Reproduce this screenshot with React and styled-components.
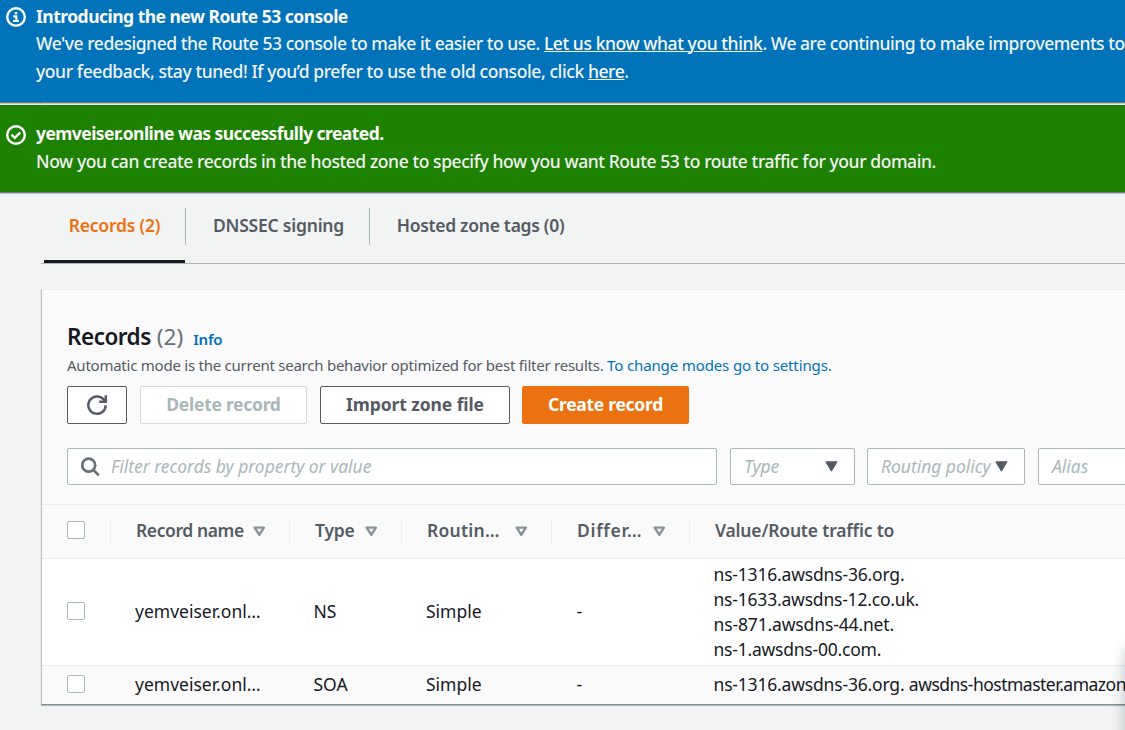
import React from 'react';
import styled, { createGlobalStyle } from 'styled-components';

const GlobalStyle = createGlobalStyle`
  *, *::before, *::after { box-sizing: border-box; }
  body {
    margin: 0;
    overflow: hidden;
    background: #f2f3f3;
    color: #16191f;
    font-family: "Noto Sans", "Open Sans", sans-serif;
    font-size: 17.5px;
  }
`;

const Page = styled.div`
  position: relative;
  display: flex;
  flex-direction: column;
  width: 100%;
  height: 730px;
  overflow: hidden;
`;

const Tracked = styled.span`
  letter-spacing: ${({ $by }) => $by}px;
`;

/* Notification banners */

const BannerStack = styled.div`
  display: flex;
  flex-direction: column;
  gap: 3px;
  background: linear-gradient(#d9dcdc, #d9dcdc) 40px 0 / 1px 100% no-repeat #f2f3f3;
`;

const Banner = styled.section`
  display: flex;
  gap: 10px;
  height: ${({ $height }) => $height}px;
  padding: ${({ $top }) => $top}px 0 0 6px;
  background: ${({ $tone }) => ($tone === 'info' ? '#0073bb' : '#1d8102')};
  color: #fafafa;
  box-shadow: 0 1px 1px rgba(0, 28, 36, 0.5), 0 2px 1px rgba(0, 28, 36, 0.12);
  white-space: nowrap;
`;

const BannerIcon = styled.svg`
  flex: none;
  width: 20px;
  height: 20px;
  margin-top: ${({ $drop }) => $drop}px;
`;

const BannerTitle = styled.h2`
  margin: 0;
  font-size: 17.5px;
  font-weight: 700;
  line-height: ${({ $line }) => $line}px;
  letter-spacing: ${({ $by }) => $by}px;
`;

const BannerLine = styled.div`
  font-weight: 500;
  line-height: 28px;
  color: #f2f3f3;
`;

const BannerLink = styled.a`
  letter-spacing: -0.42px;
  color: #fafafa;
  text-decoration: underline;
  text-decoration-thickness: 1px;
  text-decoration-skip-ink: auto;
  text-underline-offset: 1px;
`;

/* Tabs */

const Tabs = styled.nav`
  display: flex;
  flex: none;
  height: 72px;
  margin: 0 0 25px 41px;
  padding-left: 3px;
  border-bottom: 1px solid #aab7b8;
`;

const Tab = styled.div`
  display: flex;
  justify-content: center;
  width: ${({ $width }) => $width}px;
  padding: 19px 0 0 ${({ $shift }) => $shift || 0}px;
  border-bottom: 3px solid ${({ $active }) => ($active ? '#16191f' : 'transparent')};
  color: ${({ $active }) => ($active ? '#ec7211' : '#545b64')};
  font-weight: 600;
  line-height: 28px;
  letter-spacing: ${({ $by }) => $by}px;
  white-space: nowrap;
`;

const TabDivider = styled.span`
  width: 1px;
  height: 37px;
  margin-top: 16px;
  background: #aab7b8;
`;

/* Records panel */

const Panel = styled.main`
  display: flex;
  flex: none;
  flex-direction: column;
  height: 416px;
  margin-left: 41px;
  border-top: 1px solid #eaeded;
  border-left: 1px solid #bcc5c6;
  border-bottom: 1px solid #7f8f91;
  background: #fafafa;
  box-shadow: 0 1px 1px rgba(0, 28, 36, 0.25);
`;

const PanelHeader = styled.header`
  display: flex;
  flex: none;
  flex-direction: column;
  height: 214px;
  padding: 31px 0 0 25px;
`;

const HeadingRow = styled.div`
  display: flex;
  align-items: baseline;
  height: 31px;
  line-height: 31px;
`;

const Heading = styled.h1`
  margin: 0;
  font-size: 22.5px;
  font-weight: 600;
  letter-spacing: -0.5px;
`;

const Counter = styled.span`
  margin-left: 6px;
  color: #687078;
  font-size: 22.5px;
`;

const InfoLink = styled.a`
  margin-left: 10px;
  color: #0073bb;
  font-size: 15px;
  font-weight: 600;
  letter-spacing: -0.2px;
`;

const Description = styled.p`
  margin: 3px 0 11px;
  color: #545b64;
  font-size: 15px;
  line-height: 20px;
  letter-spacing: -0.24px;
  white-space: nowrap;
`;

const TextLink = styled.a`
  letter-spacing: -0.13px;
  color: #0073bb;
`;

const Actions = styled.div`
  display: flex;
  gap: 13px;
`;

const Button = styled.button`
  display: flex;
  align-items: center;
  justify-content: center;
  width: ${({ $width }) => $width}px;
  height: 38px;
  padding: 0 0 2px;
  border: 1px solid ${({ $kind }) => ({ normal: '#545b64', disabled: '#d5dbdb', primary: '#ec7211' })[$kind]};
  border-radius: 2px;
  background: ${({ $kind }) => ($kind === 'primary' ? '#ec7211' : '#fff')};
  color: ${({ $kind }) => ({ normal: '#545b64', disabled: '#aab7b8', primary: '#fff' })[$kind]};
  font: 700 17.5px/24px "Noto Sans", sans-serif;
  letter-spacing: ${({ $kind }) => ($kind === 'normal' ? -0.1 : -0.28)}px;

  &:last-child { margin-left: -1px; }
`;

const RefreshButton = styled(Button)`
  padding: 0;
`;

const Filters = styled.div`
  display: flex;
  gap: 13px;
  margin-top: 24px;
`;

const Field = styled.div`
  display: flex;
  flex: none;
  align-items: center;
  width: ${({ $width }) => $width}px;
  height: 37px;
  padding: 0 16px 0 13px;
  border: 1px solid #aab7b8;
  border-radius: 2px;
  background: #fff;
  color: #aab7b8;
  font-style: italic;
  letter-spacing: -0.04px;
  white-space: nowrap;
`;

const Placeholder = styled.span`
  padding-bottom: 2px;
  line-height: 24px;
`;

const Select = styled(Field)`
  justify-content: space-between;

  & + & { margin-left: -1px; }
  & + & + & { margin-left: 0; }
`;

const SearchIcon = styled.svg`
  flex: none;
  width: 20px;
  height: 20px;
  margin-right: 10px;
`;

/* Table */

const Row = styled.div`
  display: grid;
  flex: none;
  grid-template-columns: 69px 179px 112px 150px 138px 1fr;
  align-items: center;
  height: ${({ $height }) => $height}px;
  border-top: 1px solid #eaeded;
  background: ${({ $plain }) => ($plain ? '#fff' : '#fafafa')};
  overflow: hidden;
`;

const CheckCell = styled.div`
  display: flex;
  align-items: center;
  height: 25px;
  padding: 0 0 ${({ $lift }) => $lift || 2}px 25px;
  border-right: 1px solid ${({ $divided }) => ($divided ? '#eaeded' : 'transparent')};
`;

const Checkbox = styled.span`
  width: 18px;
  height: 18px;
  border: 1px solid #aab7b8;
  border-radius: 2px;
  background: #fff;
`;

const HeadCell = styled.div`
  display: flex;
  align-items: center;
  justify-content: space-between;
  height: 25px;
  padding: 0 23px 0 25px;
  border-right: 1px solid ${({ $last }) => ($last ? 'transparent' : '#eaeded')};
  color: #545b64;
  font-weight: 600;
  line-height: 24px;
  white-space: nowrap;
`;

const HeadLabel = styled(Tracked)`
  padding-bottom: 4px;
`;

const Cell = styled.div`
  padding: 0 0 2px ${({ $inset }) => $inset || 24}px;
  line-height: 25px;
  white-space: nowrap;
`;

const ValueCell = styled(Cell)`
  padding-bottom: ${({ $lift }) => $lift}px;
`;

const SplitPanelEdge = styled.div`
  position: absolute;
  top: 650px;
  left: 1125px;
  width: 40px;
  height: 120px;
  box-shadow: 0 0 14px rgba(0, 28, 36, 0.25);
`;

const SortIcon = () => (
  <svg width="13" height="11" viewBox="0 0 13 11" fill="none" stroke="#879596" strokeWidth="2.4" strokeLinejoin="round">
    <path d="M1.7 1.6h9.2L6.3 8.9z" />
  </svg>
);

const CaretIcon = () => (
  <svg width="13" height="11" viewBox="0 0 13 11" fill="#545b64" stroke="#545b64" strokeWidth="1" strokeLinejoin="round">
    <path d="M.8.8h11.2L6.4 10.2z" />
  </svg>
);

const COLUMNS = [
  { label: 'Record name', by: -0.4 },
  { label: 'Type', by: -0.2 },
  { label: 'Routin…', by: 0.25 },
  { label: 'Differ…', by: 0.7 },
];

const RECORDS = [
  {
    type: 'NS',
    height: 107,
    lift: 0,
    values: [
      [['ns-1316.awsdns-36.org.', -0.18]],
      [['ns-1633.awsdns-12.co.uk.', -0.2]],
      [['ns-871.awsdns-44.net.', -0.14]],
      [['ns-1.awsdns-00.com.', -0.22]],
    ],
  },
  {
    type: 'SOA',
    height: 39,
    lift: 2,
    values: [[['ns-1316.awsdns-36.org. ', -0.18], ['awsdns-hostmaster.amazon', -0.5]]],
  },
];

export default function App() {
  return (
    <Page>
      <GlobalStyle />
      <BannerStack>
        <Banner $tone="info" $height={102} $top={3}>
          <BannerIcon $drop={4} viewBox="0 0 20 20" fill="none" stroke="#fafafa" strokeWidth="2.4">
            <circle cx="10" cy="10" r="8.8" />
            <path d="M8.7 6.1h2.6M7.4 9.4h2.9v4.4M7 14h6" strokeWidth="2.2" />
          </BannerIcon>
          <div>
            <BannerTitle $line={26} $by={-0.52}>Introducing the new Route 53 console</BannerTitle>
            <BannerLine>
              <Tracked $by={-0.455}>We've redesigned the Route 53 console to make it easier to use. </Tracked>
              <BannerLink>Let us know what you think</BannerLink>
              <Tracked $by={-0.48}>. We are continuing to make improvements to</Tracked>
            </BannerLine>
            <BannerLine>
              <Tracked $by={-0.41}>your feedback, stay tuned! If you’d prefer to use the old console, click </Tracked>
              <BannerLink>here</BannerLink>.
            </BannerLine>
          </div>
        </Banner>
        <Banner $tone="success" $height={87} $top={15}>
          <BannerIcon $drop={5} viewBox="0 0 20 20" fill="none" stroke="#fafafa" strokeWidth="2.4">
            <circle cx="10" cy="10" r="8.8" />
            <path d="M5.4 9.6l3.4 3.2 5.5-5.5" />
          </BannerIcon>
          <div>
            <BannerTitle $line={27} $by={-0.56}>yemveiser.online was successfully created.</BannerTitle>
            <BannerLine>
              <Tracked $by={-0.425}>
                Now you can create records in the hosted zone to specify how you want Route 53 to route traffic for your domain.
              </Tracked>
            </BannerLine>
          </div>
        </Banner>
      </BannerStack>

      <Tabs>
        <Tab $active $width={141} $by={-0.2}>Records (2)</Tab>
        <TabDivider />
        <Tab $width={183} $shift={2} $by={-0.22}>DNSSEC signing</Tab>
        <TabDivider />
        <Tab $width={221} $by={-0.3}>Hosted zone tags (0)</Tab>
      </Tabs>

      <Panel>
        <PanelHeader>
          <HeadingRow>
            <Heading>Records</Heading>
            <Counter>(2)</Counter>
            <InfoLink>Info</InfoLink>
          </HeadingRow>
          <Description>
            Automatic mode is the current search behavior optimized for best filter results.{' '}
            <TextLink>To change modes go to settings.</TextLink>
          </Description>
          <Actions>
            <RefreshButton $kind="normal" $width={60} aria-label="Refresh">
              <svg width="22" height="22" viewBox="0 0 22 22" fill="none" stroke="#545b64" strokeWidth="2.5">
                <path d="M19.7 11.4a8.7 8.7 0 1 1-2.3-6.2l2.2 2.2" />
                <path d="M19.8 1.2v6.6h-6.6" />
              </svg>
            </RefreshButton>
            <Button $kind="disabled" $width={167}>Delete record</Button>
            <Button $kind="normal" $width={190}>Import zone file</Button>
            <Button $kind="primary" $width={167}>Create record</Button>
          </Actions>
          <Filters>
            <Field $width={650}>
              <SearchIcon viewBox="0 0 20 20" fill="none" stroke="#687078" strokeWidth="2.7">
                <circle cx="7.7" cy="8.2" r="6.5" />
                <path d="M12.4 13l5.5 5.4" />
              </SearchIcon>
              <Placeholder>Filter records by property or value</Placeholder>
            </Field>
            <Select $width={125}><Placeholder>Type</Placeholder><CaretIcon /></Select>
            <Select $width={158}><Placeholder>Routing policy</Placeholder><CaretIcon /></Select>
            <Select $width={125}><Placeholder>Alias</Placeholder><CaretIcon /></Select>
          </Filters>
        </PanelHeader>

        <Row $height={54}>
          <CheckCell $divided $lift={4}><Checkbox /></CheckCell>
          {COLUMNS.map(({ label, by }) => (
            <HeadCell key={label}>
              <HeadLabel $by={by}>{label}</HeadLabel>
              <SortIcon />
            </HeadCell>
          ))}
          <HeadCell $last><HeadLabel $by={-0.18}>Value/Route traffic to</HeadLabel></HeadCell>
        </Row>
        {RECORDS.map(({ type, height, lift, values }, i) => (
          <Row key={type} $height={height} $plain={i % 2 === 0}>
            <CheckCell><Checkbox /></CheckCell>
            <Cell>yemveiser.onl…</Cell>
            <Cell $inset={23.5}>{type}</Cell>
            <Cell>Simple</Cell>
            <Cell $inset={24.5}>-</Cell>
            <ValueCell $inset={23.5} $lift={lift}>
              {values.map((parts) => (
                <div key={parts[0][0]}>
                  {parts.map(([text, by]) => <Tracked key={text} $by={by}>{text}</Tracked>)}
                </div>
              ))}
            </ValueCell>
          </Row>
        ))}
      </Panel>
      <SplitPanelEdge />
    </Page>
  );
}
